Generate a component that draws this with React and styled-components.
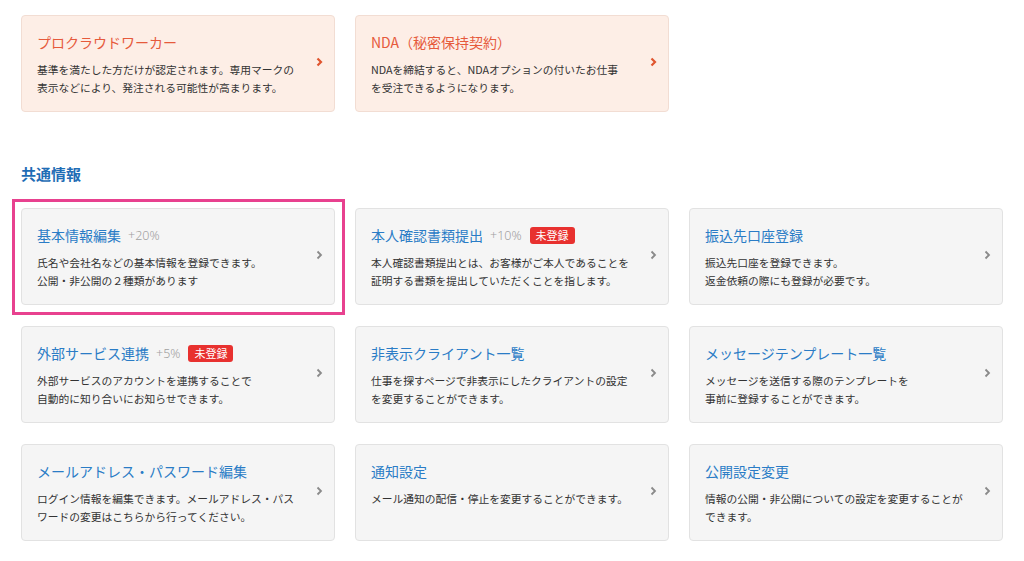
import React from "react";
import styled, { createGlobalStyle } from "styled-components";

const Global = createGlobalStyle`
  html, body { margin: 0; padding: 0; background: #fff; }
  body { font-family: "Noto Sans CJK JP", "Noto Sans", sans-serif; color: #333; }
`;

const Page = styled.div`
  padding: 15px 0 0 21px;
  width: 982px;
`;

const Grid = styled.div`
  display: grid;
  grid-template-columns: repeat(3, 314px);
  column-gap: 20px;
  row-gap: 21px;
`;

const SectionTitle = styled.h2`
  margin: 51px 0 23px;
  font-size: 15px;
  line-height: 22px;
  font-weight: 700;
  color: #1f6db5;
`;

const Card = styled.a`
  position: relative;
  box-sizing: border-box;
  height: 97px;
  display: flex;
  align-items: center;
  padding: 15px 11px 16px 15px;
  border-radius: 4px;
  text-decoration: none;
  background: ${(p) => (p.$accent ? "#fdeee6" : "#f5f5f5")};
  border: 1px solid ${(p) => (p.$accent ? "#f2ddd3" : "#e2e2e2")};

  &::before {
    content: "";
    display: ${(p) => (p.$highlight ? "block" : "none")};
    position: absolute;
    left: -10px;
    top: -10px;
    right: -11px;
    bottom: -11px;
    border: 3px solid #e8418f;
    pointer-events: none;
  }
`;

const Body = styled.div`
  flex: 1;
  align-self: flex-start;
`;

const TitleRow = styled.div`
  display: flex;
  align-items: center;
  height: 22px;
  gap: 7px;
`;

const Title = styled.span`
  font-size: 14px;
  line-height: 22px;
  color: ${(p) => (p.$accent ? "#e65a3c" : "#2a7cc6")};
`;

const Bonus = styled.span`
  font-family: "Noto Sans", sans-serif;
  font-size: 12.5px;
  color: #a0a0a0;
  font-weight: 300;
`;

const Badge = styled.span`
  background: #e8312f;
  color: #fff;
  font-size: 11px;
  line-height: 17px;
  padding: 0 6px;
  border-radius: 3px;
  margin-left: 1px;
`;

const Desc = styled.p`
  margin: 8px 0 0;
  font-size: 10.75px;
  line-height: 18px;
  color: #333;
  white-space: pre;
`;

const Chevron = styled.svg`
  flex: none;
  width: 7px;
  height: 10px;
  margin-left: 8px;
  margin-top: -2px;
`;

const Arrow = ({ accent }) => (
  <Chevron viewBox="0 0 7 10">
    <path
      d="M1.5 1.5 L5 5 L1.5 8.5"
      fill="none"
      stroke={accent ? "#e0552f" : "#8a8a8a"}
      strokeWidth={accent ? 2.2 : 1.8}
    />
  </Chevron>
);

const Item = ({ title, bonus, badge, desc, accent, highlight }) => (
  <Card $accent={accent} $highlight={highlight} href="#">
    <Body>
      <TitleRow>
        <Title $accent={accent}>{title}</Title>
        {bonus && <Bonus>{bonus}</Bonus>}
        {badge && <Badge>{badge}</Badge>}
      </TitleRow>
      <Desc>{desc}</Desc>
    </Body>
    <Arrow accent={accent} />
  </Card>
);

const top = [
  {
    title: "プロクラウドワーカー",
    desc: "基準を満たした方だけが認定されます。専用マークの\n表示などにより、発注される可能性が高まります。",
  },
  {
    title: "NDA（秘密保持契約）",
    desc: "NDAを締結すると、NDAオプションの付いたお仕事\nを受注できるようになります。",
  },
];

const common = [
  {
    title: "基本情報編集",
    bonus: "+20%",
    desc: "氏名や会社名などの基本情報を登録できます。\n公開・非公開の２種類があります",
    highlight: true,
  },
  {
    title: "本人確認書類提出",
    bonus: "+10%",
    badge: "未登録",
    desc: "本人確認書類提出とは、お客様がご本人であることを\n証明する書類を提出していただくことを指します。",
  },
  {
    title: "振込先口座登録",
    desc: "振込先口座を登録できます。\n返金依頼の際にも登録が必要です。",
  },
  {
    title: "外部サービス連携",
    bonus: "+5%",
    badge: "未登録",
    desc: "外部サービスのアカウントを連携することで\n自動的に知り合いにお知らせできます。",
  },
  {
    title: "非表示クライアント一覧",
    desc: "仕事を探すページで非表示にしたクライアントの設定\nを変更することができます。",
  },
  {
    title: "メッセージテンプレート一覧",
    desc: "メッセージを送信する際のテンプレートを\n事前に登録することができます。",
  },
  {
    title: "メールアドレス・パスワード編集",
    desc: "ログイン情報を編集できます。メールアドレス・パス\nワードの変更はこちらから行ってください。",
  },
  {
    title: "通知設定",
    desc: "メール通知の配信・停止を変更することができます。",
  },
  {
    title: "公開設定変更",
    desc: "情報の公開・非公開についての設定を変更することが\nできます。",
  },
];

export default function App() {
  return (
    <>
      <Global />
      <Page>
        <Grid>
          {top.map((t) => (
            <Item key={t.title} {...t} accent />
          ))}
        </Grid>
        <SectionTitle>共通情報</SectionTitle>
        <Grid>
          {common.map((c) => (
            <Item key={c.title} {...c} />
          ))}
        </Grid>
      </Page>
    </>
  );
}
